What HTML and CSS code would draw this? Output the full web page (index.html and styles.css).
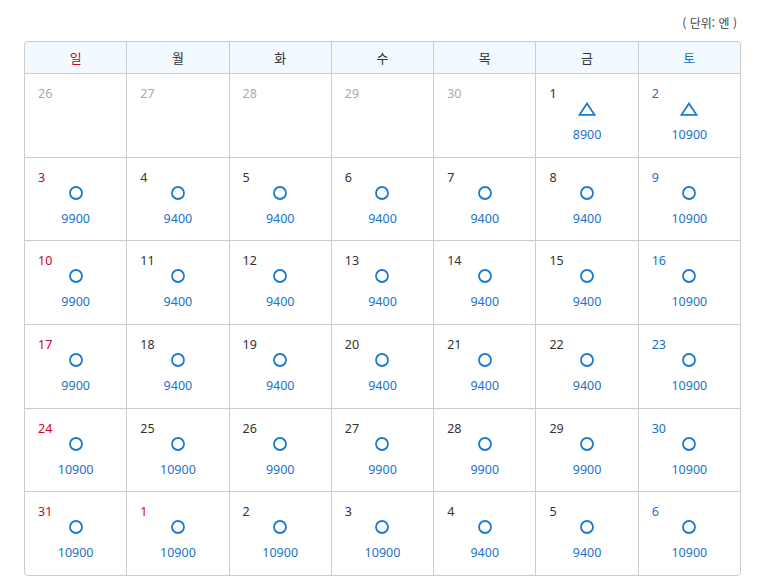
FILE: index.html
```html
<!DOCTYPE html>
<html lang="ko">
<head>
<meta charset="utf-8">
<title>요금 캘린더</title>
<link rel="stylesheet" href="styles.css">
</head>
<body>
<div class="wrap">
  <div class="unit">( 단위: 엔 )</div>
  <div class="cal">
    <div class="hd sun">일</div>
    <div class="hd">월</div>
    <div class="hd">화</div>
    <div class="hd">수</div>
    <div class="hd">목</div>
    <div class="hd">금</div>
    <div class="hd sat">토</div>

    <div class="cell prev"><span class="d">26</span></div>
    <div class="cell prev"><span class="d">27</span></div>
    <div class="cell prev"><span class="d">28</span></div>
    <div class="cell prev"><span class="d">29</span></div>
    <div class="cell prev"><span class="d">30</span></div>
    <div class="cell"><span class="d">1</span><svg class="ic" viewBox="0 0 18 14"><path d="M9 1.5 L16.5 12.8 L1.5 12.8 Z"/></svg><span class="p">8900</span></div>
    <div class="cell sat"><span class="d">2</span><svg class="ic" viewBox="0 0 18 14"><path d="M9 1.5 L16.5 12.8 L1.5 12.8 Z"/></svg><span class="p">10900</span></div>

    <div class="cell sun"><span class="d">3</span><svg class="ic" viewBox="0 0 18 14"><circle cx="9" cy="7" r="6"/></svg><span class="p">9900</span></div>
    <div class="cell"><span class="d">4</span><svg class="ic" viewBox="0 0 18 14"><circle cx="9" cy="7" r="6"/></svg><span class="p">9400</span></div>
    <div class="cell"><span class="d">5</span><svg class="ic" viewBox="0 0 18 14"><circle cx="9" cy="7" r="6"/></svg><span class="p">9400</span></div>
    <div class="cell"><span class="d">6</span><svg class="ic" viewBox="0 0 18 14"><circle cx="9" cy="7" r="6"/></svg><span class="p">9400</span></div>
    <div class="cell"><span class="d">7</span><svg class="ic" viewBox="0 0 18 14"><circle cx="9" cy="7" r="6"/></svg><span class="p">9400</span></div>
    <div class="cell"><span class="d">8</span><svg class="ic" viewBox="0 0 18 14"><circle cx="9" cy="7" r="6"/></svg><span class="p">9400</span></div>
    <div class="cell sat"><span class="d">9</span><svg class="ic" viewBox="0 0 18 14"><circle cx="9" cy="7" r="6"/></svg><span class="p">10900</span></div>

    <div class="cell sun"><span class="d">10</span><svg class="ic" viewBox="0 0 18 14"><circle cx="9" cy="7" r="6"/></svg><span class="p">9900</span></div>
    <div class="cell"><span class="d">11</span><svg class="ic" viewBox="0 0 18 14"><circle cx="9" cy="7" r="6"/></svg><span class="p">9400</span></div>
    <div class="cell"><span class="d">12</span><svg class="ic" viewBox="0 0 18 14"><circle cx="9" cy="7" r="6"/></svg><span class="p">9400</span></div>
    <div class="cell"><span class="d">13</span><svg class="ic" viewBox="0 0 18 14"><circle cx="9" cy="7" r="6"/></svg><span class="p">9400</span></div>
    <div class="cell"><span class="d">14</span><svg class="ic" viewBox="0 0 18 14"><circle cx="9" cy="7" r="6"/></svg><span class="p">9400</span></div>
    <div class="cell"><span class="d">15</span><svg class="ic" viewBox="0 0 18 14"><circle cx="9" cy="7" r="6"/></svg><span class="p">9400</span></div>
    <div class="cell sat"><span class="d">16</span><svg class="ic" viewBox="0 0 18 14"><circle cx="9" cy="7" r="6"/></svg><span class="p">10900</span></div>

    <div class="cell sun"><span class="d">17</span><svg class="ic" viewBox="0 0 18 14"><circle cx="9" cy="7" r="6"/></svg><span class="p">9900</span></div>
    <div class="cell"><span class="d">18</span><svg class="ic" viewBox="0 0 18 14"><circle cx="9" cy="7" r="6"/></svg><span class="p">9400</span></div>
    <div class="cell"><span class="d">19</span><svg class="ic" viewBox="0 0 18 14"><circle cx="9" cy="7" r="6"/></svg><span class="p">9400</span></div>
    <div class="cell"><span class="d">20</span><svg class="ic" viewBox="0 0 18 14"><circle cx="9" cy="7" r="6"/></svg><span class="p">9400</span></div>
    <div class="cell"><span class="d">21</span><svg class="ic" viewBox="0 0 18 14"><circle cx="9" cy="7" r="6"/></svg><span class="p">9400</span></div>
    <div class="cell"><span class="d">22</span><svg class="ic" viewBox="0 0 18 14"><circle cx="9" cy="7" r="6"/></svg><span class="p">9400</span></div>
    <div class="cell sat"><span class="d">23</span><svg class="ic" viewBox="0 0 18 14"><circle cx="9" cy="7" r="6"/></svg><span class="p">10900</span></div>

    <div class="cell sun"><span class="d">24</span><svg class="ic" viewBox="0 0 18 14"><circle cx="9" cy="7" r="6"/></svg><span class="p">10900</span></div>
    <div class="cell"><span class="d">25</span><svg class="ic" viewBox="0 0 18 14"><circle cx="9" cy="7" r="6"/></svg><span class="p">10900</span></div>
    <div class="cell"><span class="d">26</span><svg class="ic" viewBox="0 0 18 14"><circle cx="9" cy="7" r="6"/></svg><span class="p">9900</span></div>
    <div class="cell"><span class="d">27</span><svg class="ic" viewBox="0 0 18 14"><circle cx="9" cy="7" r="6"/></svg><span class="p">9900</span></div>
    <div class="cell"><span class="d">28</span><svg class="ic" viewBox="0 0 18 14"><circle cx="9" cy="7" r="6"/></svg><span class="p">9900</span></div>
    <div class="cell"><span class="d">29</span><svg class="ic" viewBox="0 0 18 14"><circle cx="9" cy="7" r="6"/></svg><span class="p">9900</span></div>
    <div class="cell sat"><span class="d">30</span><svg class="ic" viewBox="0 0 18 14"><circle cx="9" cy="7" r="6"/></svg><span class="p">10900</span></div>

    <div class="cell sun"><span class="d">31</span><svg class="ic" viewBox="0 0 18 14"><circle cx="9" cy="7" r="6"/></svg><span class="p">10900</span></div>
    <div class="cell sun"><span class="d">1</span><svg class="ic" viewBox="0 0 18 14"><circle cx="9" cy="7" r="6"/></svg><span class="p">10900</span></div>
    <div class="cell"><span class="d">2</span><svg class="ic" viewBox="0 0 18 14"><circle cx="9" cy="7" r="6"/></svg><span class="p">10900</span></div>
    <div class="cell"><span class="d">3</span><svg class="ic" viewBox="0 0 18 14"><circle cx="9" cy="7" r="6"/></svg><span class="p">10900</span></div>
    <div class="cell"><span class="d">4</span><svg class="ic" viewBox="0 0 18 14"><circle cx="9" cy="7" r="6"/></svg><span class="p">9400</span></div>
    <div class="cell"><span class="d">5</span><svg class="ic" viewBox="0 0 18 14"><circle cx="9" cy="7" r="6"/></svg><span class="p">9400</span></div>
    <div class="cell sat"><span class="d">6</span><svg class="ic" viewBox="0 0 18 14"><circle cx="9" cy="7" r="6"/></svg><span class="p">10900</span></div>
  </div>
</div>
</body>
</html>
```

FILE: styles.css
```css
html, body {
  margin: 0;
  padding: 0;
  background: #fff;
}
body {
  font-family: "Noto Sans", "Noto Sans CJK KR", sans-serif;
  color: #333;
}
.wrap {
  width: 717px;
  padding: 14px 0 0 24px;
}
.unit {
  text-align: right;
  font-size: 12px;
  line-height: 18px;
  color: #444;
  padding-right: 4px;
  margin-bottom: 9px;
  font-family: "Noto Sans CJK KR", sans-serif;
}
.cal {
  display: grid;
  grid-template-columns: repeat(7, 1fr);
  grid-template-rows: 31px repeat(6, 82.7px);
  gap: 1px;
  background: #cccccc;
  border: 1px solid #cccccc;
  border-radius: 4px;
  overflow: hidden;
}
.hd {
  background: #f2faff;
  display: flex;
  align-items: center;
  justify-content: center;
  font-size: 13px;
  font-family: "Noto Sans CJK KR", sans-serif;
  color: #333;
}
.hd.sun { color: #d4002b; }
.hd.sat { color: #1572c9; }
.cell {
  background: #fff;
  display: flex;
  flex-direction: column;
  align-items: center;
  padding-top: 12px;
  font-size: 12.5px;
}
.d {
  align-self: flex-start;
  padding-left: 13px;
  line-height: 16px;
  color: #333;
}
.sun .d { color: #d4002b; }
.sat .d { color: #1572c9; }
.prev .d { color: #aaa; }
.ic {
  width: 18px;
  height: 14px;
  margin-top: 0;
  fill: none;
  stroke: #1a7bd0;
  stroke-width: 1.8;
}
.p {
  margin-top: 11px;
  line-height: 16px;
  color: #1a73c9;
}
```
